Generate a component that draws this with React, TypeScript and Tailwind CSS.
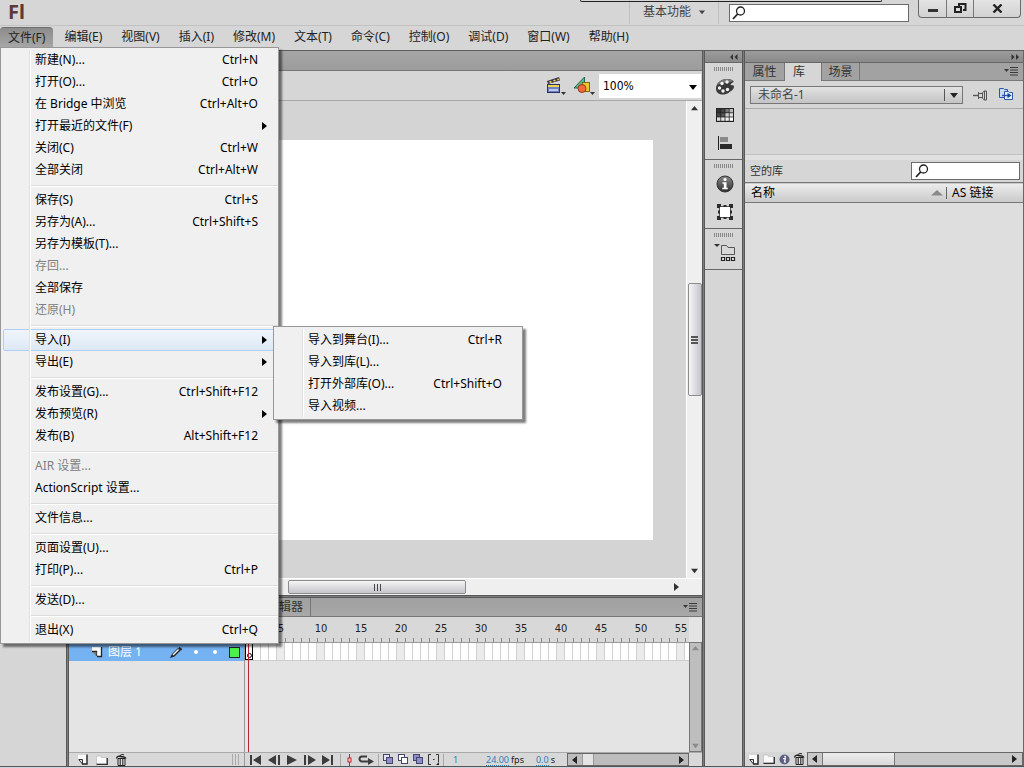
import type { ReactNode } from 'react';

type MenuEntry = {
  label: string;
  keys?: string;
  disabled?: boolean;
  arrow?: boolean;
  children?: MenuEntry[];
};

const MENUS = ['文件(F)', '编辑(E)', '视图(V)', '插入(I)', '修改(M)', '文本(T)', '命令(C)', '控制(O)', '调试(D)', '窗口(W)', '帮助(H)'];

// Each inner array is a group, groups are split by a separator
const FILE_MENU: MenuEntry[][] = [
  [
    { label: '新建(N)...', keys: 'Ctrl+N' },
    { label: '打开(O)...', keys: 'Ctrl+O' },
    { label: '在 Bridge 中浏览', keys: 'Ctrl+Alt+O' },
    { label: '打开最近的文件(F)', arrow: true },
    { label: '关闭(C)', keys: 'Ctrl+W' },
    { label: '全部关闭', keys: 'Ctrl+Alt+W' },
  ],
  [
    { label: '保存(S)', keys: 'Ctrl+S' },
    { label: '另存为(A)...', keys: 'Ctrl+Shift+S' },
    { label: '另存为模板(T)...' },
    { label: '存回...', disabled: true },
    { label: '全部保存' },
    { label: '还原(H)', disabled: true },
  ],
  [
    {
      label: '导入(I)',
      arrow: true,
      children: [
        { label: '导入到舞台(I)...', keys: 'Ctrl+R' },
        { label: '导入到库(L)...' },
        { label: '打开外部库(O)...', keys: 'Ctrl+Shift+O' },
        { label: '导入视频...' },
      ],
    },
    { label: '导出(E)', arrow: true },
  ],
  [
    { label: '发布设置(G)...', keys: 'Ctrl+Shift+F12' },
    { label: '发布预览(R)', arrow: true },
    { label: '发布(B)', keys: 'Alt+Shift+F12' },
  ],
  [
    { label: 'AIR 设置...', disabled: true },
    { label: 'ActionScript 设置...' },
  ],
  [{ label: '文件信息...' }],
  [
    { label: '页面设置(U)...' },
    { label: '打印(P)...', keys: 'Ctrl+P' },
  ],
  [{ label: '发送(D)...' }],
  [{ label: '退出(X)', keys: 'Ctrl+Q' }],
];

const FRAMES = Array.from({ length: 56 }, (_, i) => i + 1);

/* ---------- icons ---------- */

function Tri({ dir, className = '' }: { dir: 'up' | 'down' | 'left' | 'right'; className?: string }) {
  const points = {
    up: '0,6 4,1 8,6',
    down: '0,2 8,2 4,7',
    left: '6,0 6,8 1,4',
    right: '2,0 2,8 7,4',
  };
  return (
    <svg viewBox="0 0 8 8" className={`shrink-0 fill-current ${className}`} aria-hidden="true">
      <polygon points={points[dir]} />
    </svg>
  );
}

function SearchIcon() {
  return (
    <svg width="14" height="14" viewBox="0 0 14 14" className="shrink-0" fill="none" stroke="#222">
      <circle cx="8.5" cy="5" r="4" strokeWidth="1.3" />
      <path d="M5.6 8 1 13" strokeWidth="1.8" />
    </svg>
  );
}

function PanelMenuIcon() {
  return (
    <svg width="15" height="9" viewBox="0 0 15 9" className="shrink-0" fill="#3a3a3a">
      <path d="M0 2h5L2.5 5z" />
      <path d="M6 0h8v1H6zM6 2.5h8v1H6zM6 5h8v1H6zM6 7.5h8v1H6z" />
    </svg>
  );
}

function DoubleArrow({ flip }: { flip?: boolean }) {
  return (
    <svg width="8" height="6" viewBox="0 0 8 6" fill="#333">
      {flip ? <path d="M3 0v6L0 3zM7.5 0v6l-3-3z" /> : <path d="M.5 0v6l3-3zM5 0v6l3-3z" />}
    </svg>
  );
}

function ClapperIcon() {
  return (
    <svg width="20" height="20" viewBox="0 0 20 20">
      <path d="M1 5 13 1l1 3.5L2 8z" fill="#3a3550" />
      <path d="m3 5.5 2-.7 1 1.6-2 .7zM7 4.200 9 3.500l1 1.600-2 .7zM11 2.900l1.600-.5.7 1.500-1.600.5z" fill="#e8c84c" />
      <rect x="1.5" y="8.500" width="12" height="8" fill="#7180c4" stroke="#2c3264" />
      <path d="M2 9h11v2H2z" fill="#f2d24c" />
      <path d="M3 13h9v2H3z" fill="#bcc6ec" />
      <path d="M15 16h5l-2.500 3z" fill="#333" />
    </svg>
  );
}

function ShapesIcon() {
  return (
    <svg width="22" height="20" viewBox="0 0 22 20">
      <path d="M11.5 1v11H1z" fill="#56b98a" stroke="#1f6a4c" />
      <rect x="9.500" y="6.500" width="7" height="9" fill="#e8cb34" stroke="#7d6710" />
      <circle cx="9" cy="12.500" r="4" fill="#ef6a3c" stroke="#a33214" />
      <path d="M17 16h5l-2.500 3z" fill="#333" />
    </svg>
  );
}

function PaletteIcon() {
  return (
    <svg width="20" height="18" viewBox="0 0 20 18">
      <path d="M12 1C5.500 1 1 5.500 1 10.500 1 14.500 4 16.500 8 16.500c4.500 0 6-2.300 8-3.500 1.500-1 3-2 3-5 0-1-1.500-.5-2.500-.8C15 6.800 15.500 5.600 17 5c1.400-.5 2-1.200 1.300-2C17.300 1.700 15 1 12 1z" fill="#3a3a3a" />
      <path d="M12 1C7 1 3 4 1.600 7.500 6 4 11 6 18.300 3 17.300 1.700 15 1 12 1z" fill="#777" />
      <g fill="#f2f2f2">
        <circle cx="7" cy="5.500" r="1.700" />
        <circle cx="12" cy="4" r="1.700" />
        <circle cx="4.500" cy="10" r="1.700" />
        <circle cx="8" cy="13" r="1.700" />
        <circle cx="12.500" cy="11.500" r="1.700" />
      </g>
    </svg>
  );
}

function SwatchesIcon() {
  const fills = ['#333', '#444', '#777', '#bbb', '#444', '#555', '#ccc', '#ddd', '#ddd', '#e4e4e4', '#eee', '#fff'];
  return (
    <svg width="18" height="14" viewBox="0 0 18 14">
      <rect width="18" height="14" fill="#222" />
      {fills.map((fill, i) => (
        <rect key={i} x={1 + (i % 4) * 4.200} y={1 + Math.floor(i / 4) * 4.200} width="3.400" height="3.400" fill={fill} />
      ))}
    </svg>
  );
}

function AlignIcon() {
  return (
    <svg width="16" height="16" viewBox="0 0 16 16">
      <path d="M1 1h1v14H1z" fill="#222" />
      <rect x="3" y="2" width="8" height="5" fill="#8a8a8a" />
      <rect x="3" y="9" width="12" height="5" fill="#2a2a2a" />
    </svg>
  );
}

function InfoIcon() {
  return (
    <svg width="18" height="18" viewBox="0 0 18 18">
      <defs>
        <linearGradient id="ball" x1="0" y1="0" x2="0" y2="1">
          <stop offset="0" stopColor="#8a8a8a" />
          <stop offset="1" stopColor="#2e2e2e" />
        </linearGradient>
      </defs>
      <circle cx="9" cy="9" r="8" fill="url(#ball)" stroke="#333" />
      <circle cx="9" cy="4.500" r="1.600" fill="#fff" />
      <path d="M6.500 7.300H10.500v5.500h1.300v1.400H6.300v-1.400h1.500V8.700H6.500z" fill="#fff" />
    </svg>
  );
}

function TransformIcon() {
  return (
    <svg width="16" height="16" viewBox="0 0 16 16" fill="#2a2a2a">
      <rect x="2.500" y="2.500" width="11" height="11" fill="#fff" stroke="#555" />
      <path d="M0 0h4v3H3v1H0zM6.500 1h3v2h-3zM12 0h4v4h-3V3h-1zM1 6.500h2v3H1zM13 6.500h2v3h-2zM0 12h3v1h1v3H0zM6.500 13h3v2h-3zM13 12h3v4h-4v-3h1z" />
    </svg>
  );
}

function ComponentsIcon() {
  return (
    <svg width="22" height="20" viewBox="0 0 22 20">
      <path d="M0 1h6L3 4z" fill="#333" />
      <path d="M7.500 11.500v-9h5l1.500 2h6.500v7z" fill="#d8d8d8" stroke="#555" />
      <path d="M7.500 14.500h3v3h-3zM12.500 14.500h3v3h-3zM17.500 14.500h3v3h-3z" fill="#eee" stroke="#222" strokeWidth="1.200" />
    </svg>
  );
}

function PinIcon() {
  return (
    <svg width="15" height="12" viewBox="0 0 15 12" fill="none" stroke="#555">
      <path d="M0 6.500h5" strokeWidth="1.400" />
      <path d="M5.500 3v7M5.500 4.500h4v4h-4M9.500 3.500l2-1.500h2v9h-2l-2-1.500zM11.500 2v9" />
    </svg>
  );
}

function NewLibraryIcon() {
  return (
    <svg width="15" height="13" viewBox="0 0 15 13" fill="none" stroke="#2d56a8">
      <path d="M6 9.500H.5v-9h4l1 1h3V3" fill="#c4dcf4" />
      <path d="M5.500 3.500h4l1 1h3v7h-8z" fill="#e8f1fb" />
      <path d="M3 7.500h6" strokeWidth="1.400" />
      <path d="M8.500 4.800v5.400L12.500 7.500z" fill="#1d3f96" stroke="none" />
    </svg>
  );
}

function PageIcon() {
  return (
    <svg width="11" height="11" viewBox="0 0 11 11">
      <path d="M1 1h8.500v8.500H1z" fill="#fafafa" />
      <path d="M1 5.500h4.500V10H1z" fill="#d8d8d8" />
      <path d="M1.500 5.500h4V10M2 6l3.500 4" fill="none" stroke="#333" />
      <path d="M10 .5V10H5" fill="none" stroke="#222" strokeWidth="1.400" />
    </svg>
  );
}

function LayerPageIcon() {
  return (
    <svg width="12" height="12" viewBox="0 0 12 12">
      <path d="M1 1h9v9H6V5.500H1z" fill="#fff" />
      <path d="M1 5.500h4.500V10M10.500 1v9.500H6" fill="none" stroke="#222" strokeWidth="1.300" />
      <path d="M1.500 6 5.500 10V6z" fill="#777" />
    </svg>
  );
}

function FolderIcon() {
  return (
    <svg width="12" height="10" viewBox="0 0 12 10">
      <path d="M.5 9V1h4l1 1.500h5V9z" fill="#fafafa" stroke="#b4b4b4" strokeWidth=".6" />
      <path d="M.5 9.300h10.800V3" fill="none" stroke="#333" strokeWidth="1.300" />
    </svg>
  );
}

function TrashIcon() {
  return (
    <svg width="11" height="12" viewBox="0 0 11 12" fill="none" stroke="#222">
      <path d="M2 4.500h7v7H2z" fill="#e8e8e8" />
      <path d="M4.200 5v6M6.800 5v6" strokeWidth="1.100" />
      <path d="M.5 4.500C1 2 3 2 5 2.500s4 0 5 2" strokeWidth="1.400" />
      <path d="M4 2C4 .5 7 0 8 1" />
    </svg>
  );
}

function PropsIcon() {
  return (
    <svg width="11" height="11" viewBox="0 0 11 11">
      <circle cx="5.500" cy="5.500" r="5" fill="#5f5f86" />
      <circle cx="6.200" cy="2.800" r="1" fill="#fff" />
      <path d="M4 4.700h2.300L5.500 8H7" fill="none" stroke="#fff" strokeWidth="1.200" />
    </svg>
  );
}

function PencilIcon() {
  return (
    <svg width="14" height="13" viewBox="0 0 14 13">
      <path d="M1 12 3 8l6-6 2.500 2.500-6 6z" fill="#222" />
      <path d="M3.500 8.500 9 3l1 1-5.500 5.500z" fill="#fff" />
      <path d="M10 1.500 12.500 4" stroke="#222" strokeWidth="2" />
    </svg>
  );
}

function OnionIcon({ back, front }: { back: string; front: string }) {
  return (
    <svg width="11" height="11" viewBox="0 0 11 11" stroke="#45456e">
      <rect x=".5" y=".5" width="6" height="6" fill={back} />
      <rect x="3.500" y="3.500" width="6" height="6" fill={front} />
    </svg>
  );
}

/* ---------- menus ---------- */

function MenuPanel({ groups, className }: { groups: MenuEntry[][]; className: string }) {
  return (
    <div className={`absolute border border-[#979797] bg-[#f0f0f0] text-black shadow-[3px_3px_2px_#00000080] ${className}`}>
      {groups.map((group, g) => (
        <ul key={g} role="menu" className="relative">
          {g > 0 && (
            <li role="separator" className="flex h-2 items-end pb-[2px] pl-[30px]">
              <div className="h-[2px] w-full border-t border-[#dcdcdc] bg-white" />
            </li>
          )}
          {group.map((entry) => (
            <li key={entry.label} className="relative px-[2px]">
              <button
                disabled={entry.disabled}
                className={`flex h-[22px] w-full items-center border pl-[31px] text-left whitespace-nowrap ${
                  entry.children ? 'rounded-xs border-[#aecff7] bg-linear-to-b from-[#f0f4fa] to-[#dde9f6]' : 'border-transparent'
                } ${entry.disabled ? 'text-[#808080]' : ''}`}
              >
                <span className="flex-1">{entry.label}</span>
                {entry.keys && <span className="pr-[17px]">{entry.keys}</span>}
                {entry.arrow && <Tri dir="right" className="mr-[7px] size-2" />}
              </button>
              {entry.children && <MenuPanel groups={[entry.children]} className="-top-[3px] left-[272px] z-20 w-[250px] py-[2px]" />}
            </li>
          ))}
        </ul>
      ))}
      <div className="pointer-events-none absolute inset-y-[2px] left-[28px] w-[2px] border-l border-[#e0e0e0] bg-white" />
    </div>
  );
}

function MenuBar() {
  return (
    <nav className="relative z-10 flex gap-[3px] border-b border-[#5e5e5e] pt-px pb-[3px]">
      {MENUS.map((name, i) => (
        <div key={name} className="relative">
          <button
            className={`h-5 px-2 whitespace-nowrap ${
              i === 0 ? 'rounded-t-sm border-t border-[#6e6e6e] bg-linear-to-b from-[#8c8c8c] to-[#a6a6a6]' : ''
            }`}
          >
            {name}
          </button>
          {i === 0 && <MenuPanel groups={FILE_MENU} className="top-full left-0 w-[279px] pt-px pb-[2px]" />}
        </div>
      ))}
    </nav>
  );
}

/* ---------- chrome ---------- */

function TitleBar() {
  return (
    <header className="relative flex h-[26px] items-start border-b border-[#c2c2c2] pr-[3px]">
      <div className="absolute top-0 right-[142px] h-[2px] w-[302px] rounded-b-sm border-x border-b border-[#222]" />
      <h1 className="pl-2 text-[20px] leading-6 font-bold text-[#5c3a38]">Fl</h1>
      <button className="ml-auto flex h-6 items-center gap-2 border-x border-[#c0c0c0] px-[13px] text-[#444]">
        基本功能
        <Tri dir="down" className="size-[6px]" />
      </button>
      <label className="mt-1 ml-[10px] flex h-[18px] w-[180px] items-center border border-[#6a6a6a] bg-white pl-[2px]">
        <SearchIcon />
        <input aria-label="搜索帮助" className="w-full min-w-0 outline-none" />
      </label>
      <div className="ml-[9px] flex h-[18px] divide-x divide-[#777] rounded-b-sm border border-t-0 border-[#6a6a6a] bg-linear-to-b from-[#e4e4e4] to-[#d2d2d2]">
        <button aria-label="最小化" className="flex w-7 items-center justify-center">
          <span className="mt-1 h-[3px] w-[10px] bg-[#333]" />
        </button>
        <button aria-label="还原" className="flex w-[27px] items-center justify-center">
          <svg width="13" height="11" viewBox="0 0 13 11" fill="none" stroke="#222" strokeWidth="2">
            <path d="M5 3V1h6.500v6H9" />
            <path d="M1 4h6v5H1z" />
          </svg>
        </button>
        <button aria-label="关闭" className="flex w-[46px] items-center justify-center">
          <svg width="11" height="9" viewBox="0 0 11 9" stroke="#222" strokeWidth="2.400">
            <path d="m1.500 .5 8 8M9.500 .5l-8 8" />
          </svg>
        </button>
      </div>
    </header>
  );
}

function Gutter() {
  return <div className="w-[3px] shrink-0 border-x border-[#585858] bg-[#7c7c7c]" />;
}

/* ---------- document ---------- */

function EditBar() {
  return (
    <div className="flex h-[30px] items-center justify-end border-b border-[#a8a8a8]">
      <button aria-label="编辑场景" className="mr-[7px]"><ClapperIcon /></button>
      <button aria-label="编辑元件" className="mr-[4px]"><ShapesIcon /></button>
      <div className="relative mr-px h-6 w-[102px] bg-white text-black">
        <select aria-label="缩放" className="h-full w-full appearance-none pl-1 font-['DejaVu_Sans_Condensed','Noto_Sans',sans-serif] text-[12px] outline-none">
          <option>100%</option>
        </select>
        <Tri dir="down" className="pointer-events-none absolute top-[9px] right-1 size-2" />
      </div>
    </div>
  );
}

function DocumentPanel() {
  return (
    <section className="flex flex-1 flex-col bg-[#d6d6d6]">
      <div className="h-5 border-b border-[#777] bg-linear-to-b from-[#a6a6a6] to-[#9c9c9c]" />
      <EditBar />
      <div className="flex flex-1">
        <div className="flex flex-1 items-center justify-center bg-[#d4d4d4]">
          <div className="h-[400px] w-[550px] shrink-0 bg-white" />
        </div>
        <div className="flex w-4 flex-col items-center border-l border-white bg-[#efefef] py-1 text-[#333]">
          <Tri dir="up" className="size-[7px]" />
          <div className="min-h-4 flex-[172]" />
          <div className="flex h-[113px] w-[14px] flex-col items-center justify-center gap-px rounded-xs border border-[#8c8c8c] bg-linear-to-r from-[#f6f6f6] to-[#c4c4cc]">
            <span className="h-[2px] w-[7px] bg-[#555]" />
            <span className="h-[2px] w-[7px] bg-[#555]" />
            <span className="h-[2px] w-[7px] bg-[#555]" />
          </div>
          <div className="flex-[172]" />
          <Tri dir="down" className="size-[7px]" />
        </div>
      </div>
      <div className="flex h-[17px] items-center border-t border-white bg-[#efefef] pr-[22px] text-[#333]">
        <Tri dir="left" className="ml-2 size-2" />
        <div className="flex-[203]" />
        <div className="flex h-[14px] w-[178px] items-center justify-center gap-[2px] rounded-xs border border-[#8c8c8c] bg-linear-to-b from-[#f6f6f6] to-[#c4c4cc]">
          <span className="h-[7px] w-px bg-[#444]" />
          <span className="h-[7px] w-px bg-[#444]" />
          <span className="h-[7px] w-px bg-[#444]" />
        </div>
        <div className="flex-[206]" />
        <Tri dir="right" className="size-2" />
      </div>
    </section>
  );
}

/* ---------- timeline ---------- */

function PlaybackButton({ label, children }: { label: string; children: ReactNode }) {
  return (
    <button aria-label={label}>
      <svg width="12" height="10" viewBox="0 0 12 10" fill="#3c3c3c">{children}</svg>
    </button>
  );
}

function TimelineFooter() {
  return (
    <div className="flex h-[14px] items-center border-t border-[#aaa] bg-[#d8d8d8] text-[9px]">
      <div className="flex h-full w-[176px] shrink-0 items-center gap-2 border-r border-[#999] pl-2">
        <button aria-label="新建图层"><PageIcon /></button>
        <button aria-label="新建文件夹"><FolderIcon /></button>
        <button aria-label="删除"><TrashIcon /></button>
        <div className="mr-[5px] ml-auto flex h-[11px] w-[7px] justify-between border-x border-[#aaa] px-[2px]">
          <span className="w-px bg-[#aaa]" />
        </div>
      </div>
      <div className="flex items-center gap-[6px] pl-[5px]">
        <PlaybackButton label="转到第一帧"><path d="M0 0h2v10H0zM11 0v10L3 5z" /></PlaybackButton>
        <PlaybackButton label="后退一帧"><path d="M8 0v10L0 5zM10 0h2v10h-2z" /></PlaybackButton>
        <PlaybackButton label="播放"><path d="M1 0v10l10-5z" /></PlaybackButton>
        <PlaybackButton label="前进一帧"><path d="M0 0h2v10H0zM4 0v10l8-5z" /></PlaybackButton>
        <PlaybackButton label="转到最后一帧"><path d="M0 0v10l8-5zM9 0h2v10H9z" /></PlaybackButton>
      </div>
      <div className="ml-[6px] flex h-3 items-center gap-1 border-x border-[#aaa] px-1">
        <svg width="9" height="12" viewBox="0 0 9 12" fill="none" stroke="#cc2020">
          <path d="M4.500 0v4M4.500 8v4" />
          <rect x="3" y="4" width="3" height="4" />
        </svg>
        <svg width="16" height="10" viewBox="0 0 16 10" fill="none" stroke="#3c3c3c" strokeWidth="2">
          <path d="M9 1.500H4a2.500 2.500 0 0 0 0 5h6" />
          <path d="M10 3v7l6-3.500z" fill="#3c3c3c" stroke="none" />
        </svg>
      </div>
      <div className="flex h-3 items-center gap-1 border-r border-[#aaa] px-1">
        <OnionIcon back="#e4e4f4" front="#8f8fc8" />
        <OnionIcon back="#fff" front="#fff" />
        <OnionIcon back="#8f8fc8" front="#8f8fc8" />
        <svg width="11" height="11" viewBox="0 0 11 11" fill="none" stroke="#333">
          <path d="M3 .5H.5v10H3M8 .5h2.500V8" />
          <path d="M11 8v3H8z" fill="#222" stroke="none" />
          <path d="M5 5.500h1.500" />
        </svg>
      </div>
      <div className="flex items-center leading-[11px] text-[#222]">
        <a href="#frame" className="ml-[9px] w-[33px] text-[#2f7fb8]"><span className="border-b border-dotted">1</span></a>
        <a href="#fps" className="border-b border-dotted text-[#2f7fb8]">24.00</a>
        <span className="ml-[2px]">fps</span>
        <a href="#time" className="ml-3 border-b border-dotted text-[#2f7fb8]">0.0</a>
        <span className="ml-[2px]">s</span>
      </div>
      <div className="mr-[13px] ml-auto flex h-[13px] w-[122px] shrink-0 items-center border border-[#666] bg-[#bdbdbd] text-[#222]">
        <Tri dir="left" className="mx-[3px] size-2" />
        <div className="h-full w-3 border-x border-[#999] bg-[#e4e4e4]" />
        <Tri dir="right" className="mr-[3px] ml-auto size-2" />
      </div>
    </div>
  );
}

function Timeline() {
  return (
    <section className="flex h-[168px] shrink-0 flex-col bg-[#e4e4e4]">
      <div className="flex h-[19px] items-stretch border-b border-[#777] bg-linear-to-b from-[#a0a0a0] to-[#a8a8a8] pl-[166px] text-[#333]">
        <button className="border-x border-[#777] px-[7px] leading-[18px] whitespace-nowrap">动画编辑器</button>
        <div className="mr-1 ml-auto flex items-center"><PanelMenuIcon /></div>
      </div>
      <div className="flex min-h-0 flex-1">
        {/* Layers */}
        <div className="w-[176px] shrink-0 border-r border-[#999]">
          <div className="h-[26px] border-b border-[#999] bg-[#d8d8d8]" />
          <div className="flex h-[18px] items-center bg-[#74b2f2] text-white">
            <span className="ml-[22px]"><LayerPageIcon /></span>
            <span className="ml-[5px] w-[61px] leading-[14px]">图层 1</span>
            <PencilIcon />
            <span className="ml-[11px] size-1 rounded-full bg-white" />
            <span className="ml-[15px] size-1 rounded-full bg-white" />
            <span className="ml-[12px] size-[11px] border border-[#222] bg-[#4cf04c]" />
          </div>
        </div>
        {/* Frames */}
        <div className="relative w-0 flex-1 overflow-hidden">
          <div className="flex h-[26px] items-end border-b border-[#999] bg-[#d8d8d8] text-[#222]">
            {FRAMES.map((n) => (
              <div key={n} className="flex w-2 shrink-0 flex-col">
                <span className="flex h-[17px] justify-center font-['DejaVu_Sans_Condensed','Noto_Sans',sans-serif] text-[11px] leading-[16px]">{n % 5 === 0 && n}</span>
                <span className="h-1 border-l border-[#888]" />
              </div>
            ))}
          </div>
          <div className="flex h-[18px] border-b border-[#ccc]">
            {FRAMES.map((n) => (
              <div
                key={n}
                className={`w-2 shrink-0 ${
                  n === 1
                    ? 'flex items-end justify-center border border-t-0 border-black bg-white pb-px'
                    : n % 5 === 0
                      ? 'border-r border-[#d0d0d0] bg-[#ebebeb]'
                      : 'border-r border-[#d0d0d0] bg-white'
                }`}
              >
                {n === 1 && <span className="size-[5px] shrink-0 rounded-full border border-black" />}
              </div>
            ))}
          </div>
          <div className="absolute top-[26px] bottom-0 left-[3px] w-px bg-[#b8283c]" />
        </div>
        <div className="mt-[25px] flex w-[13px] shrink-0 flex-col items-center justify-between border border-[#777] bg-[#bebebe] py-[2px] text-[#8c8c8c]">
          <Tri dir="up" className="size-[7px]" />
          <Tri dir="down" className="size-[7px]" />
        </div>
      </div>
      <TimelineFooter />
    </section>
  );
}

/* ---------- right side ---------- */

function Dock() {
  const groups = [
    [
      { label: '颜色', icon: <PaletteIcon /> },
      { label: '样本', icon: <SwatchesIcon /> },
      { label: '对齐', icon: <AlignIcon /> },
    ],
    [
      { label: '信息', icon: <InfoIcon /> },
      { label: '变形', icon: <TransformIcon /> },
    ],
    [{ label: '组件', icon: <ComponentsIcon /> }],
  ];
  return (
    <aside className="w-[37px] shrink-0 bg-[#d6d6d6]">
      <div className="flex h-3 items-center justify-end border-b border-[#666] bg-linear-to-b from-[#9c9c9c] to-[#8a8a8a] pr-1">
        <DoubleArrow flip />
      </div>
      {groups.map((group, g) => (
        <div key={g} className="flex flex-col items-center border-b border-[#666] pb-[2px]">
          <div className="mt-1 mb-[2px] h-1 w-[19px] bg-[repeating-linear-gradient(90deg,#888_0_1px,transparent_1px_2px)]" />
          {group.map(({ label, icon }) => (
            <button key={label} aria-label={label} title={label} className="flex h-7 w-full items-center justify-center pl-[2px]">{icon}</button>
          ))}
        </div>
      ))}
    </aside>
  );
}

function Library() {
  return (
    <aside className="flex w-[279px] shrink-0 flex-col border-r border-[#666] bg-[#d6d6d6]">
      <div className="flex h-3 items-center justify-end border-b border-[#666] bg-linear-to-b from-[#9c9c9c] to-[#8a8a8a] pr-1">
        <DoubleArrow />
      </div>
      <div className="flex h-[18px] bg-[#a2a2a2] text-[#333]">
        <button className="w-10 border-r border-b border-[#777]">属性</button>
        <button className="w-9 bg-[#d6d6d6] pr-2">库</button>
        <button className="w-[39px] border-x border-b border-[#777]">场景</button>
        <div className="flex flex-1 items-center justify-end border-b border-[#777] pr-1"><PanelMenuIcon /></div>
      </div>
      <div className="flex h-7 items-center border-b border-[#aaa] pr-[9px] pl-[5px]">
        <div className="relative flex-1">
          <select aria-label="文档" className="block h-[18px] w-full appearance-none border border-[#777] bg-linear-to-b from-[#e2e2e2] to-[#c4c4c4] pl-[7px] leading-[16px] text-[#444] outline-none">
            <option>未命名-1</option>
          </select>
          <div className="pointer-events-none absolute inset-y-[3px] right-0 flex w-[19px] items-center justify-center border-l border-[#555] text-[#222]">
            <Tri dir="down" className="size-2" />
          </div>
        </div>
        <button aria-label="固定当前库" className="ml-[10px]"><PinIcon /></button>
        <button aria-label="新建库面板" className="ml-[11px]"><NewLibraryIcon /></button>
      </div>
      <div className="h-[46px] border-b border-[#c2c2c2]" />
      <div className="h-[5px] bg-[#e0e0e0]" />
      <div className="flex h-[22px] items-center pr-[3px] pl-[5px] text-[#333]">
        <span className="text-[11px]">空的库</span>
        <label className="ml-auto flex h-[18px] w-[109px] items-center border border-[#6a6a6a] bg-white pl-[3px]">
          <SearchIcon />
          <input aria-label="搜索库" className="w-full min-w-0 outline-none" />
        </label>
      </div>
      <div className="flex-1 bg-[#dedede]">
        <table className="w-full table-fixed border-collapse text-left text-black">
          <thead className="border-y border-[#777] bg-linear-to-b from-[#ececec] to-[#cacaca]">
            <tr className="h-5">
              <th className="p-0 pl-[6px] font-normal">
                <div className="flex h-3 items-center justify-between border-r border-[#666] pr-[3px]">
                  名称
                  <svg width="12" height="6" viewBox="0 0 12 6" fill="#8a8a8a"><path d="M0 5.500h12L6 0z" /></svg>
                </div>
              </th>
              <th className="w-[76px] p-0 pl-[5px] font-normal">AS 链接</th>
            </tr>
          </thead>
        </table>
      </div>
      <div className="flex h-[14px] items-center pl-[3px]">
        <div className="flex items-center gap-1">
          <button aria-label="新建元件"><PageIcon /></button>
          <button aria-label="新建文件夹"><FolderIcon /></button>
          <button aria-label="属性"><PropsIcon /></button>
          <button aria-label="删除"><TrashIcon /></button>
        </div>
        <div className="ml-[2px] flex h-full flex-1 items-center border border-[#666] bg-[#c8c8c8] text-[#222]">
          <Tri dir="left" className="mx-[3px] size-2" />
          <div className="h-full w-[73px] border-x border-[#777] bg-linear-to-b from-[#ececec] to-[#dadada]" />
          <Tri dir="right" className="mr-1 ml-auto size-2" />
        </div>
      </div>
    </aside>
  );
}

export default function App() {
  return (
    <div className="flex min-h-screen flex-col bg-[#d6d6d6] font-['Noto_Sans','Noto_Sans_CJK_SC',sans-serif] text-[12px] leading-4 text-[#222]">
      <TitleBar />
      <MenuBar />
      <main className="flex flex-1">
        <aside className="w-[66px] shrink-0 bg-[#d6d6d6]" />
        <Gutter />
        <div className="flex min-w-0 flex-1 flex-col">
          <DocumentPanel />
          <div className="h-[3px] border-y border-[#585858] bg-[#7c7c7c]" />
          <Timeline />
        </div>
        <Gutter />
        <Dock />
        <Gutter />
        <Library />
      </main>
      <footer className="h-[2px] border-t border-[#555] bg-[#ccd4de]" />
    </div>
  );
}
